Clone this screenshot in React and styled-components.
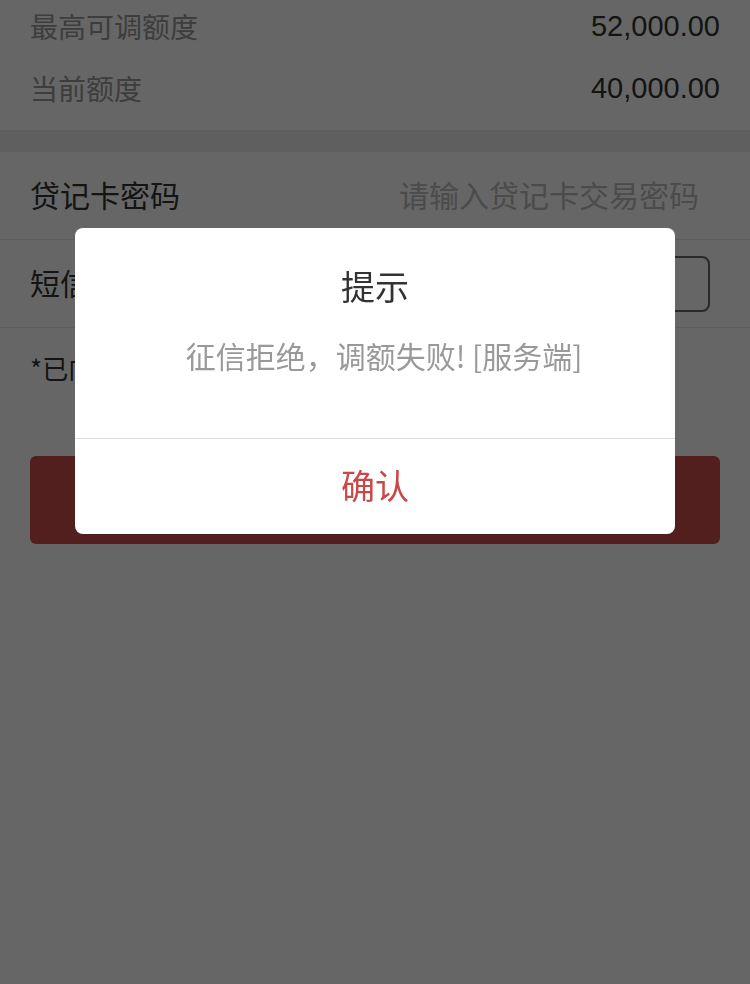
import React from "react";
import styled, { createGlobalStyle } from "styled-components";

const GlobalStyle = createGlobalStyle`
  html, body { margin: 0; padding: 0; background: #ffffff; }
  body { font-family: "Noto Sans CJK SC", "Liberation Sans", sans-serif; }
  * { box-sizing: border-box; }
`;

const Page = styled.div`
  width: 750px;
  min-height: 984px;
  background: #ffffff;
  display: flex;
  flex-direction: column;
`;

const InfoList = styled.div`
  display: flex;
  flex-direction: column;
  gap: 22px;
  padding: 6px 30px 22px;
  border-bottom: 1px solid #e5e5e5;
`;

const InfoRow = styled.div`
  display: flex;
  justify-content: space-between;
  align-items: center;
  height: 40px;
`;

const InfoLabel = styled.span`
  font-size: 28px;
  color: #999999;
`;

const Amount = styled.span`
  font-family: "Liberation Sans", Arial, sans-serif;
  font-size: 29px;
  color: #333333;
`;

const Gap = styled.div`
  height: 21px;
  background: #ededed;
`;

const FormRow = styled.div`
  display: flex;
  align-items: center;
  justify-content: space-between;
  height: 88px;
  padding: 0 40px 4px 30px;
  border-bottom: 1px solid #e5e5e5;
`;

const FormLabel = styled.span`
  font-size: 30px;
  color: #333333;
`;

const Placeholder = styled.span`
  font-size: 30px;
  color: #bbbbbb;
  padding-right: 11px;
`;

const CodeButton = styled.div`
  width: 240px;
  height: 56px;
  margin-top: 4px;
  border: 2px solid #666666;
  border-radius: 8px;
  display: flex;
  align-items: center;
  justify-content: center;
  font-size: 26px;
  color: #333333;
`;

const Hint = styled.p`
  margin: 20px 30px 0;
  font-size: 26px;
  line-height: 40px;
  color: #333333;
`;

const SubmitButton = styled.div`
  margin: 68px 30px 0;
  height: 88px;
  border-radius: 6px;
  background: #cf4d4d;
  color: #ffffff;
  font-size: 32px;
  display: flex;
  align-items: center;
  justify-content: center;
`;

const Overlay = styled.div`
  position: fixed;
  inset: 0;
  background: rgba(0, 0, 0, 0.6);
  display: flex;
  flex-direction: column;
  align-items: center;
`;

const Dialog = styled.div`
  margin-top: 228px;
  width: 600px;
  background: #ffffff;
  border-radius: 8px;
  overflow: hidden;
  display: flex;
  flex-direction: column;
`;

const DialogBody = styled.div`
  display: flex;
  flex-direction: column;
  align-items: center;
  padding: 38px 30px 62px;
  border-bottom: 1px solid #dddddd;
`;

const DialogTitle = styled.div`
  font-size: 34px;
  line-height: 40px;
  color: #333333;
`;

const DialogMessage = styled.div`
  margin-top: 28px;
  padding-left: 18px;
  font-size: 30px;
  line-height: 42px;
  color: #999999;
`;

const DialogAction = styled.div`
  height: 95px;
  display: flex;
  align-items: center;
  justify-content: center;
  padding-bottom: 4px;
  font-size: 34px;
  color: #c94848;
`;

export default function App() {
  return (
    <>
      <GlobalStyle />
      <Page>
        <InfoList>
          <InfoRow>
            <InfoLabel>最高可调额度</InfoLabel>
            <Amount>52,000.00</Amount>
          </InfoRow>
          <InfoRow>
            <InfoLabel>当前额度</InfoLabel>
            <Amount>40,000.00</Amount>
          </InfoRow>
        </InfoList>
        <Gap />
        <FormRow>
          <FormLabel>贷记卡密码</FormLabel>
          <Placeholder>请输入贷记卡交易密码</Placeholder>
        </FormRow>
        <FormRow>
          <FormLabel>短信验证码</FormLabel>
          <CodeButton>获取验证码</CodeButton>
        </FormRow>
        <Hint>*已向您预留的手机号发送验证码</Hint>
        <SubmitButton>确认调额</SubmitButton>
      </Page>
      <Overlay>
        <Dialog>
          <DialogBody>
            <DialogTitle>提示</DialogTitle>
            <DialogMessage>征信拒绝，调额失败! [服务端]</DialogMessage>
          </DialogBody>
          <DialogAction>确认</DialogAction>
        </Dialog>
      </Overlay>
    </>
  );
}
